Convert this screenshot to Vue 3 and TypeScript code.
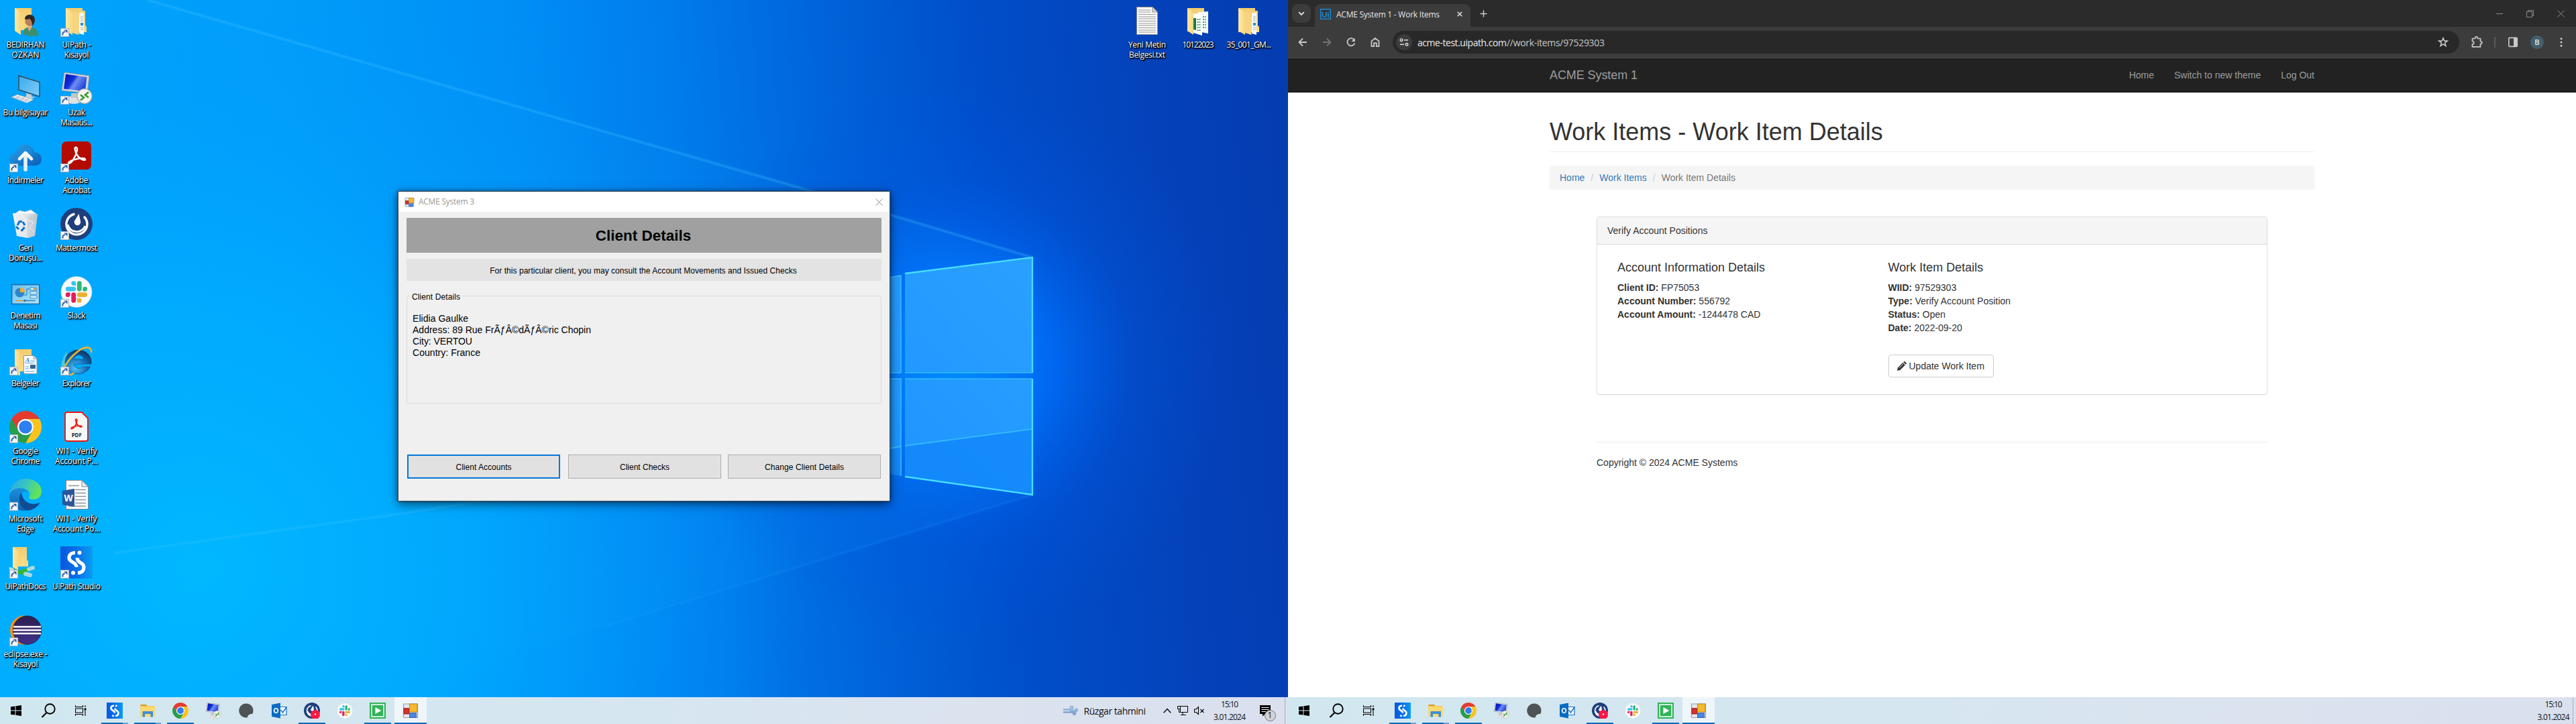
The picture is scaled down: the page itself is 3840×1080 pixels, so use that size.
<script setup lang="ts">
interface Shortcut {
  icon: string
  lines: [string, number][]
  link?: boolean
}

interface TaskItem {
  icon: string
  state?: 'open' | 'stacked' | 'active'
}

// Tracks a label out or in so that it takes the given width in pixels.
const vFit = {
  mounted(el: HTMLElement, binding: { value: number }) {
    const natural = el.getBoundingClientRect().width
    const count = (el.textContent ?? '').length
    if (count > 1) {
      const gap = (binding.value - natural) / (count - 1)
      el.style.letterSpacing = `${gap.toFixed(3)}px`
      el.style.marginRight = `${(-gap).toFixed(3)}px`
    }
  },
}

const columns: Shortcut[][] = [
  [
    { icon: 'user', lines: [['BEDIRHAN', 57], ['OZKAN', 41]] },
    { icon: 'pc', lines: [['Bu bilgisayar', 67]] },
    { icon: 'cloud', lines: [['İndirmeler', 54]], link: true },
    { icon: 'bin', lines: [['Geri', 21], ['Dönüşü...', 50]] },
    { icon: 'panel', lines: [['Denetim', 45], ['Masası', 36]] },
    { icon: 'docs', lines: [['Belgeler', 42]], link: true },
    { icon: 'chrome', lines: [['Google', 38], ['Chrome', 43]], link: true },
    { icon: 'edge', lines: [['Microsoft', 51], ['Edge', 26]], link: true },
    { icon: 'netfolder', lines: [['UiPathDocs', 61]], link: true },
    { icon: 'eclipse', lines: [['eclipse.exe -', 65], ['Kısayol', 37]], link: true },
  ],
  [
    { icon: 'folder', lines: [['UiPath -', 43], ['Kısayol', 37]], link: true },
    { icon: 'rdp', lines: [['Uzak', 26], ['Masaüs...', 48]], link: true },
    { icon: 'acrobat', lines: [['Adobe', 35], ['Acrobat', 42]], link: true },
    { icon: 'mattermost', lines: [['Mattermost', 62]], link: true },
    { icon: 'slack', lines: [['Slack', 27]], link: true },
    { icon: 'ie', lines: [['Explorer', 43]], link: true },
    { icon: 'pdf', lines: [['WI1 - Verify', 61], ['Account P...', 64]] },
    { icon: 'word', lines: [['WI1 - Verify', 61], ['Account Po...', 71]] },
    { icon: 'studio', lines: [['UiPath Studio', 72]], link: true },
  ],
]

const rightShortcuts: Shortcut[] = [
  { icon: 'text', lines: [['Yeni Metin', 56], ['Belgesi.txt', 54]] },
  { icon: 'sheets', lines: [['10122023', 47]] },
  { icon: 'folder', lines: [['35_001_GM...', 67]] },
]

const taskItems: TaskItem[] = [
  { icon: 'studio', state: 'stacked' },
  { icon: 'explorer', state: 'stacked' },
  { icon: 'chrome', state: 'open' },
  { icon: 'rdp' },
  { icon: 'blob' },
  { icon: 'outlook' },
  { icon: 'mattermost-rec', state: 'open' },
  { icon: 'slack' },
  { icon: 'play', state: 'open' },
  { icon: 'form', state: 'active' },
]

const clientLines: [string, number][] = [
  ['Elidia Gaulke', 83],
  ['Address: 89 Rue FrÃƒÂ©dÃƒÂ©ric Chopin', 266],
  ['City: VERTOU', 89],
  ['Country: France', 101],
]

const accountRows: [string, string][] = [
  ['Client ID:', 'FP75053'],
  ['Account Number:', '556792'],
  ['Account Amount:', '-1244478 CAD'],
]

const itemRows: [string, string][] = [
  ['WIID:', '97529303'],
  ['Type:', 'Verify Account Position'],
  ['Status:', 'Open'],
  ['Date:', '2022-09-20'],
]
</script>

<template>
  <svg class="sprite" width="0" height="0" aria-hidden="true">
    <defs>
      <linearGradient id="gFlap" x1="0" y1="0" x2="1" y2="0"><stop offset="0" stop-color="#ffeaa8" /><stop offset="1" stop-color="#f8d67e" /></linearGradient>
      <linearGradient id="gBack" x1="0" y1="0" x2="0" y2="1"><stop offset="0" stop-color="#f3cd6e" /><stop offset="1" stop-color="#fbdc87" /></linearGradient>
      <linearGradient id="gCloud" x1="0" y1="0" x2="1" y2="1"><stop offset="0" stop-color="#2aa3ea" /><stop offset="1" stop-color="#0a5eb8" /></linearGradient>
      <linearGradient id="gScreen" x1="0" y1="0" x2="1" y2="1"><stop offset="0" stop-color="#3aa8ea" /><stop offset="1" stop-color="#7fd0fb" /></linearGradient>
      <linearGradient id="gRdp" x1="0" y1="0" x2="1" y2=".5"><stop offset="0" stop-color="#0410b0" /><stop offset=".45" stop-color="#1230d8" /><stop offset=".6" stop-color="#6f8ff5" /><stop offset="1" stop-color="#2446d8" /></linearGradient>
      <linearGradient id="gPanel" x1="0" y1="0" x2="1" y2="1"><stop offset="0" stop-color="#5fc0f2" /><stop offset="1" stop-color="#b9e8fd" /></linearGradient>
      <radialGradient id="gIe" cx=".4" cy=".75" r=".8"><stop offset="0" stop-color="#4fc6ff" /><stop offset=".55" stop-color="#0f6cb8" /><stop offset="1" stop-color="#0d2f55" /></radialGradient>
      <linearGradient id="gEdgeTop" x1="0" y1="0" x2="1" y2=".3"><stop offset="0" stop-color="#2aa6e8" /><stop offset=".5" stop-color="#34c3c8" /><stop offset="1" stop-color="#63e35a" /></linearGradient>
      <linearGradient id="gEdgeLeft" x1="0" y1="0" x2="0" y2="1"><stop offset="0" stop-color="#1b8fdc" /><stop offset="1" stop-color="#0e5fb4" /></linearGradient>
      <linearGradient id="gStudio" x1="0" y1="0" x2="1" y2="0"><stop offset="0" stop-color="#0758e0" /><stop offset=".5" stop-color="#0b6ee6" /><stop offset="1" stop-color="#0a9cf2" /></linearGradient>
      <linearGradient id="gEclipse" x1="0" y1="0" x2="0" y2="1"><stop offset="0" stop-color="#2a1f4e" /><stop offset="1" stop-color="#43308a" /></linearGradient>
      <linearGradient id="gBin" x1="0" y1="0" x2="1" y2="0"><stop offset="0" stop-color="#f2f5f7" /><stop offset=".6" stop-color="#dfe4e8" /><stop offset="1" stop-color="#b9c2c9" /></linearGradient>

      <symbol id="i-user" viewBox="0 0 48 48">
        <path d="M8 5H33V38H8Z" fill="url(#gBack)" /><path d="M8 5L17 12V45L8 39Z" fill="url(#gFlap)" />
        <path d="M20 44C20 37 24 33 31 33S43 38 43.500 46C35 47.500 27 47 20 44Z" fill="#3c8f6e" /><path d="M26 33L30 40L34 33Z" fill="#d9a57d" />
        <circle cx="30.500" cy="25" r="7.200" fill="#b98058" /><path d="M23 22C23 16 27 15 31 15S38 18 38 23C37 29 35 31 34 31C34 27 33 23 30 21C27 22 25 22 23 22Z" fill="#2c2726" />
      </symbol>
      <symbol id="i-folder" viewBox="0 0 48 48">
        <path d="M8 5H33V9H37V31L39 33V41H8Z" fill="url(#gBack)" /><path d="M28 12H35V45L28 43Z" fill="#f4f7f9" /><path d="M30 18h4M30 21h4M30 24h4M30 34h4M30 37h4" stroke="#9fb0bb" /><path d="M30 27h4v4h-4z" fill="#2a8fd0" />
        <path d="M18 10L27.500 13V45L18 42Z" fill="#f7d580" /><path d="M8 5L18 12V45L8 39Z" fill="url(#gFlap)" />
      </symbol>
      <symbol id="i-sheets" viewBox="0 0 48 48">
        <path d="M8 5H33V40H8Z" fill="url(#gBack)" /><path d="M24 11L39 10V43L24 40Z" fill="#f5f7f8" /><path d="M17 14L27 12L30 18V46L17 42Z" fill="#fff" />
        <path d="M17 20H21V38L17 37Z" fill="#1e7a48" /><path d="M22.500 22h5M22.500 26h5M22.500 30h5M22.500 34h5M22.500 38h5M31 18h4.500M31 22h4.500M31 26h4.500M31 30h4.500M31 34h4.500" stroke="#4f9d72" stroke-width="2" stroke-dasharray="2 1" /><path d="M8 5L17 12V45L8 39Z" fill="url(#gFlap)" />
      </symbol>
      <symbol id="i-docs" viewBox="0 0 48 48">
        <path d="M8 9H33V42H8Z" fill="url(#gBack)" /><path d="M8 9L16 15V49L8 44Z" fill="url(#gFlap)" />
        <path d="M21.500 18.500H36L41 23.500V45.500H21.500Z" fill="#fff" stroke="#8c979f" /><path d="M36 18.500V23.500H41" fill="#dfe5e9" stroke="#8c979f" />
        <text x="24" y="27.500" font-family="Liberation Serif, serif" font-size="9" font-weight="700" font-style="italic" fill="#1779c8">A</text>
        <path d="M31 26.500h7M23.500 29.500h14M23.500 35h6M23.500 38h6M23.500 42h14" stroke="#4aa0dc" /><path d="M31 32h8v6h-8z" fill="#35688f" />
      </symbol>
      <symbol id="i-netfolder" viewBox="0 0 48 48">
        <path d="M5 1H26V20L28 22V30H5Z" fill="url(#gBack)" /><path d="M5 1L13 7V36L5 31Z" fill="url(#gFlap)" />
        <path d="M3 35L28 42M14 39L33 33" stroke="#33b534" stroke-width="5" stroke-linecap="round" /><path d="M29 34L35 32M24 41L31 43" stroke="#a9d9de" stroke-width="6" stroke-linecap="round" /><path d="M1 33.500L4 34.500" stroke="#bfe3e6" stroke-width="5" stroke-linecap="round" />
      </symbol>
      <symbol id="i-pc" viewBox="0 0 48 48">
        <path d="M14 5L45 14.500V36L14 26Z" fill="url(#gScreen)" stroke="#30495e" stroke-width="1.400" /><path d="M25 31L33 33V36L39 37L30 40L21 37L25 35.500Z" fill="#c8d2da" />
        <path d="M3 37L12 33L36 40.500L26 45.500Z" fill="#eef2f5" stroke="#9aa7b2" stroke-width=".8" /><path d="M6 37L27 43.500M9 35.500L30 42M10 38.500L16 35M17 41L23 37M23 43L29 39" stroke="#a9b4bd" stroke-width=".9" />
      </symbol>
      <symbol id="i-rdp" viewBox="0 0 48 48">
        <path d="M6 0L43 5L40 31L2 27Z" fill="#d5d8dc" stroke="#8f969d" stroke-width=".8" /><path d="M8 2.500L39.500 7L37 28L5 24.500Z" fill="url(#gRdp)" />
        <ellipse cx="20" cy="41" rx="12" ry="6" fill="#dfe1e3" /><path d="M16 31H26V38H16Z" fill="#c3c7cb" />
        <circle cx="36" cy="35.500" r="11" fill="#f4f4f2" stroke="#a9a9a6" stroke-width="1.200" /><path d="M30 33.500L35 37.500L30 41.500" fill="none" stroke="#3c9a2f" stroke-width="2.600" /><path d="M42 29.500L37 33.500L42 37.500" fill="none" stroke="#3c9a2f" stroke-width="2.600" />
      </symbol>
      <symbol id="i-cloud" viewBox="0 0 48 48">
        <path d="M10 38C4 38 0 33 0 28.500S4 19 10 19C11 11 16 6.500 23 6.500S35 11 37 18C43 18 48 22 48 28.500S43 38 38 38Z" fill="url(#gCloud)" /><circle cx="23" cy="19" r="11" fill="#1e90dc" opacity=".55" />
        <path d="M24 20V44" stroke="#e8eef4" stroke-width="5.600" stroke-linecap="round" fill="none" /><path d="M15 28L24 19L33 28" stroke="#f5f8fb" stroke-width="4.600" stroke-linecap="round" stroke-linejoin="round" fill="none" />
      </symbol>
      <symbol id="i-acrobat" viewBox="0 0 48 48">
        <rect x="2" y="2" width="44" height="42" rx="7" fill="#b30b00" /><path d="M12 34.500C11.500 30 35 24.500 37 28.500C38 32 24 29 21.500 12.500C22 9 26.500 10.500 24.500 17C22 26.500 16 36 12 34.500Z" fill="none" stroke="#fff" stroke-width="2.400" />
      </symbol>
      <symbol id="i-bin" viewBox="0 0 48 48">
        <path d="M8 9L15 4L23 6L32 3L40 9L24 15Z" fill="#f6f8f9" stroke="#c5cdd3" stroke-width=".6" /><path d="M5 8L42 9L38 42L27 45L11 42Z" fill="url(#gBin)" /><path d="M27 14L27 45L38 42L42 9Z" fill="#c4ccd2" opacity=".6" /><path d="M17 10L24 17L20 24L28 18L36 22L30 30L37 36" fill="none" stroke="#fff" opacity=".7" />
        <path d="M12 26L15 20.500H19M20 21L23 26M22.500 29L19 33.500H17M14 32L10 28" fill="none" stroke="#1173cc" stroke-width="3" />
      </symbol>
      <symbol id="i-mattermost" viewBox="0 0 48 48">
        <circle cx="24" cy="24" r="24" fill="#1e3f7c" /><path d="M20 9.500A15.500 15.500 0 1 0 36 14" fill="none" stroke="#fff" stroke-width="3.400" stroke-linecap="round" /><path d="M11 25A13.500 13 0 0 0 37 27" fill="none" stroke="#fff" stroke-width="3" /><path d="M27.500 9L30 20A4.800 4.800 0 1 1 20.800 20Z" fill="#fff" />
      </symbol>
      <symbol id="i-mattermost-rec" viewBox="0 0 48 48">
        <use href="#i-mattermost" width="48" height="48" /><circle cx="34" cy="36" r="14" fill="#ff1744" /><circle cx="34" cy="35" r="2.400" fill="#fff" />
      </symbol>
      <symbol id="i-panel" viewBox="0 0 48 48">
        <rect x="3.600" y="13.600" width="41" height="28.800" fill="url(#gPanel)" stroke="#1b6fae" stroke-width="1.600" /><circle cx="15.500" cy="25.500" r="7" fill="#2b86c8" /><path d="M16 25V17.500A7.500 7.500 0 0 1 23.500 25Z" fill="#f3a73c" />
        <path d="M22 29H26V20H30" fill="none" stroke="#2b78b4" /><path d="M31 18h10v4H31zM31 24h10v4H31zM31 30h10v4H31z" fill="#d6f0fc" stroke="#3a88bf" /><path d="M36 20h4" stroke="#e88b23" stroke-width="2" /><path d="M9 37.500H22" stroke="#e88b23" stroke-width="1.400" /><path d="M22 37.500H39" stroke="#2b78b4" stroke-width="1.400" /><circle cx="23" cy="37.500" r="1.800" fill="#2b78b4" />
      </symbol>
      <symbol id="i-slack" viewBox="0 0 48 48">
        <circle cx="24" cy="24.500" r="23" fill="#fafafa" stroke="#c9d3d9" stroke-width=".6" />
        <g transform="translate(7.800 8.200) scale(1.350)">
          <path fill="#e01e5a" d="M5.040 15.170a2.520 2.520 0 1 1-2.520-2.520h2.520zM6.310 15.170a2.520 2.520 0 0 1 5.040 0v6.310a2.520 2.520 0 0 1-5.040 0z" />
          <path fill="#36c5f0" d="M8.830 5.040a2.520 2.520 0 1 1 2.520-2.520v2.520zM8.830 6.310a2.520 2.520 0 0 1 0 5.040H2.520a2.520 2.520 0 0 1 0-5.040z" />
          <path fill="#2eb67d" d="M18.960 8.830a2.520 2.520 0 1 1 2.520 2.520h-2.520zM17.690 8.830a2.520 2.520 0 0 1-5.040 0V2.520a2.520 2.520 0 0 1 5.040 0z" />
          <path fill="#ecb22e" d="M15.170 18.960a2.520 2.520 0 1 1-2.520 2.520v-2.520zM15.170 17.690a2.520 2.520 0 0 1 0-5.040h6.310a2.520 2.520 0 0 1 0 5.040z" />
        </g>
      </symbol>
      <symbol id="i-ie" viewBox="0 0 48 48">
        <path d="M10 12C-1 26 -1 46 8 48C16 47 8 22 10 12Z" fill="#7fd8c8" opacity=".6" />
        <path d="M26 10A19.500 18 0 1 0 44.500 35H33.500C31 39 20.500 38.500 20.500 31H46C47.500 18 38 10 26 10ZM20.500 24C21 15.500 34 15.500 34.500 24Z" fill="url(#gIe)" stroke="#1c4a73" stroke-width=".7" />
        <path d="M46 14C47 4 36 4 25 13C11 24 0 42 7 48C11 51 17 47 20 44" fill="none" stroke="#f0b429" stroke-width="2.600" />
      </symbol>
      <symbol id="i-chrome" viewBox="0 0 48 48">
        <path d="M3.220 12A24 24 0 0 1 44.780 12H24A12 12 0 0 0 13.610 30Z" fill="#e33b2e" /><path d="M44.780 12A24 24 0 0 1 24 48L34.390 30A12 12 0 0 0 24 12Z" fill="#fcc31e" /><path d="M24 48A24 24 0 0 1 3.220 12L13.610 30A12 12 0 0 0 34.390 30Z" fill="#2a9c4a" /><circle cx="24" cy="24" r="12" fill="#fff" /><circle cx="24" cy="24" r="9.800" fill="#2d7ff0" />
      </symbol>
      <symbol id="i-pdf" viewBox="0 0 48 48">
        <path d="M10 2H32L41 11V42A3 3 0 0 1 38 45H10A3 3 0 0 1 7 42V5A3 3 0 0 1 10 2Z" fill="#f6f6f5" stroke="#f01a0f" stroke-width="2" />
        <path d="M16 26.500C15.500 23.500 30 20.500 32 23C32.500 25.500 24.500 24 22.500 13.500C22.500 11 26 11.500 24.500 16C23 22 19 28 16 26.500Z" fill="none" stroke="#f01a0f" stroke-width="1.700" />
        <text x="24.200" y="39" text-anchor="middle" font-family="Open Sans, sans-serif" font-size="8" font-weight="700" textLength="15" lengthAdjust="spacingAndGlyphs" fill="#222">PDF</text>
      </symbol>
      <symbol id="i-edge" viewBox="0 0 48 48">
        <path d="M0 24C1 9 12 0 24 0C38 0 48 9 48 19C48 27 42 31 36 31C30 31 28 29 30 26C32 20 27 15 18 14C9 14 2 18 0 24Z" fill="url(#gEdgeTop)" />
        <path d="M0 25C2 17 10 13 18 14.500C24 15.500 27 18 28 21C21 16 14 22 14 31C14 39 20 46 27 47.500C12 50 -1 39 0 25Z" fill="url(#gEdgeLeft)" />
        <path d="M18 21C11 28 14 44 27 47.500C35 47 41 43 45 37C45 36 44 35.500 43 36.500C33 40 20 36 18 21Z" fill="#0f4c94" />
      </symbol>
      <symbol id="i-word" viewBox="0 0 48 48">
        <path d="M8.500 2.500H32L41.500 12V45.500H8.500Z" fill="#fff" stroke="#7d868d" /><path d="M32 2.500V12H41.500Z" fill="#e9ecee" stroke="#7d868d" /><path d="M12 10.500H28M22 16.500H38M22 21.500H38M22 26.500H38M22 31.500H38M22 36.500H38M12 41H38" stroke="#8d9499" stroke-width="1.300" />
        <path d="M3 18L21 15V42L3 39Z" fill="#2a5699" /><text x="12" y="34" text-anchor="middle" font-family="Liberation Sans, sans-serif" font-size="14" font-weight="700" fill="#fff">W</text>
      </symbol>
      <symbol id="i-studio" viewBox="0 0 48 48">
        <rect width="48" height="48" fill="url(#gStudio)" /><path d="M22 9.500C16 9.500 13 13 13 17C13 25 24 22 24 31" fill="none" stroke="#fff" stroke-width="5.200" /><path d="M26 39.500C32 39.500 35 36 35 31C35 23 25 26 25 17" fill="none" stroke="#fff" stroke-width="5.200" /><circle cx="28.500" cy="9.500" r="3" fill="#fff" /><circle cx="19" cy="39.500" r="3" fill="#fff" />
      </symbol>
      <symbol id="i-eclipse" viewBox="0 0 48 48">
        <path d="M23 2A22 22 0 0 0 23 46A26 26 0 0 1 23 2Z" fill="#f7941e" /><circle cx="26.500" cy="24" r="21.200" fill="url(#gEclipse)" stroke="#1a1330" stroke-width=".8" /><path d="M6 19H47M5.500 24H47.500M6 29H47" stroke="#fff" stroke-width="2.600" />
      </symbol>
      <symbol id="i-text" viewBox="0 0 48 48">
        <path d="M8.500 3.500H32L39.500 11V44.500H8.500Z" fill="#f8f8f8" stroke="#8a8a86" /><path d="M32 3.500V11H39.500Z" fill="#d8d8d4" stroke="#8a8a86" /><path d="M11 8H29M11 11H29M11 14.500H37M11 18H37M11 21H37M11 24.500H37M11 28H37M11 31H37M11 34.500H37M11 38H37M11 41H37" stroke="#9a9a98" stroke-width="1" />
      </symbol>
      <symbol id="i-explorer" viewBox="0 0 48 48">
        <path d="M3 6H20L22 10H45V42H3Z" fill="#f7c74b" /><path d="M3 6H20L22 10H3Z" fill="#d9981f" /><path d="M3 12H45V42H3Z" fill="#fbd870" /><path d="M9 26H40V43H33V34H16V43H9Z" fill="#3f8fd2" />
      </symbol>
      <symbol id="i-blob" viewBox="0 0 48 48">
        <path d="M24 3A21 21 0 1 0 28 44.500C28 38 33 34 42.500 34A21 21 0 0 0 24 3Z" fill="#4e5355" />
      </symbol>
      <symbol id="i-outlook" viewBox="0 0 48 48">
        <path d="M24 13H46V37H24Z" fill="#fff" stroke="#0f6fc5" stroke-width="2.400" /><path d="M29 22L35 30L46 14" fill="none" stroke="#0f6fc5" stroke-width="3" /><path d="M2 6L28 1V47L2 42Z" fill="#0a6cc4" /><text x="15" y="31" text-anchor="middle" font-family="Liberation Sans, sans-serif" font-size="20" font-weight="700" fill="#fff">O</text>
      </symbol>
      <symbol id="i-play" viewBox="0 0 48 48">
        <rect width="48" height="48" fill="#2fb457" /><rect x="6" y="6" width="36" height="36" fill="none" stroke="#e3f7e8" stroke-width="3.600" /><path d="M17 14L35 24L17 34Z" fill="#fff" />
      </symbol>
      <symbol id="i-form" viewBox="0 0 48 48">
        <path d="M3 4H45V45H3Z" fill="#e4e7ec" stroke="#98a0aa" stroke-width="2.400" /><rect x="21" y="4" width="23" height="24" fill="#f4b92e" stroke="#b07a10" stroke-width="1.600" /><rect x="4" y="17" width="15" height="17" fill="#d5302a" stroke="#8f1512" stroke-width="1.600" /><rect x="21" y="31" width="20" height="14" fill="#4d84dc" stroke="#2d5dab" stroke-width="1.600" />
      </symbol>
      <symbol id="i-link" viewBox="0 0 13 13">
        <rect x=".5" y=".5" width="12" height="12" fill="#f6f6f6" stroke="#a9b2b8" /><path d="M3.500 10.500C3 7 4.500 5.200 7 5.200" fill="none" stroke="#2a5ca8" stroke-width="2" /><path d="M5.500 2.500H10.500V7.500Z" fill="#2a5ca8" />
      </symbol>
      <symbol id="i-start" viewBox="0 0 16 16"><path d="M0 2.300L6.500 1.400V7.500H0ZM7.500 1.250L16 0V7.500H7.500ZM0 8.500H6.500V14.600L0 13.700ZM7.500 8.500H16V16L7.500 14.800Z" fill="#000" /></symbol>
      <symbol id="i-search" viewBox="0 0 22 22"><circle cx="13.500" cy="8.500" r="7.200" fill="none" stroke="#000" stroke-width="1.900" /><path d="M8.500 14L1.500 21" stroke="#000" stroke-width="2.200" /></symbol>
      <symbol id="i-tasks" viewBox="0 0 17 16"><path d="M.5 0V2.500H11.500V0M.5 16V13.500H11.500V16M.5 5H11.500V11H.5ZM15 0V3M15 8V16" fill="none" stroke="#000" stroke-width="1.100" /><path d="M13.500 4.500H16.500V7.500H13.500Z" /></symbol>
    </defs>
  </svg>

  <main class="stage">
    <section class="screen desktop">
      <svg class="wallpaper" viewBox="0 0 1920 1080" preserveAspectRatio="none" aria-hidden="true">
        <defs>
          <linearGradient id="wBase" gradientUnits="userSpaceOnUse" x1="0" y1="80" x2="1900" y2="-80">
            <stop offset="0" stop-color="#00a5fb" /><stop offset=".22" stop-color="#009dfa" /><stop offset=".4" stop-color="#008ff6" /><stop offset=".52" stop-color="#007dec" /><stop offset=".64" stop-color="#0064da" /><stop offset=".76" stop-color="#004eca" /><stop offset=".88" stop-color="#0443bb" /><stop offset="1" stop-color="#053cb0" />
          </linearGradient>
          <radialGradient id="wLeft" gradientUnits="userSpaceOnUse" cx="300" cy="850" r="900"><stop offset="0" stop-color="#00b8ff" /><stop offset=".45" stop-color="#00adff" stop-opacity=".75" /><stop offset="1" stop-color="#0092ff" stop-opacity="0" /></radialGradient>
          <radialGradient id="wGlow" gradientUnits="userSpaceOnUse" cx="1420" cy="540" r="420"><stop offset="0" stop-color="#008cff" /><stop offset=".35" stop-color="#0070fb" stop-opacity=".8" /><stop offset=".65" stop-color="#005ae4" stop-opacity=".3" /><stop offset="1" stop-color="#0050e0" stop-opacity="0" /></radialGradient>
          <linearGradient id="wBeam" gradientUnits="userSpaceOnUse" x1="200" y1="0" x2="1500" y2="0"><stop offset="0" stop-color="#18b4ff" stop-opacity=".1" /><stop offset="1" stop-color="#0a90ff" stop-opacity=".3" /></linearGradient>
          <linearGradient id="wPane" x1="0" y1="1" x2="1" y2="0"><stop offset="0" stop-color="#1b93ff" /><stop offset="1" stop-color="#2aa0ff" /></linearGradient>
          <filter id="wSoft" x="-20%" y="-20%" width="140%" height="140%"><feGaussianBlur stdDeviation="1.200" /></filter>
        </defs>
        <rect width="1920" height="1080" fill="url(#wBase)" />
        <rect width="1920" height="1080" fill="url(#wLeft)" />
        <rect width="1920" height="1080" fill="url(#wGlow)" />
        <path d="M220 0L1206 284L1539 384V738L560 1040L0 1080V0Z" fill="url(#wBeam)" opacity=".4" />
        <path d="M220 0L1206 284L1539 384" fill="none" stroke="#3fc0ff" stroke-opacity=".4" stroke-width="3" filter="url(#wSoft)" />
        <path d="M170 825L593 767L1343 650" fill="none" stroke="#4accff" stroke-opacity=".25" stroke-width="3" filter="url(#wSoft)" />
        <path d="M1539 738L900 935" fill="none" stroke="#28a0ff" stroke-opacity=".18" stroke-width="3" filter="url(#wSoft)" />
        <path d="M1230 430L1343 411V556H1230ZM1230 565H1343V710L1230 690ZM1349 408L1539 384V556H1349ZM1349 565H1539V738L1349 711Z" fill="url(#wPane)" />
        <path d="M1230 690L1343 666V710L1230 690ZM1349 665L1539 640V738L1349 711Z" fill="#0a7ef8" opacity=".55" />
        <path d="M1230 686L1343 666M1349 665L1539 640" stroke="#3cc8ff" stroke-width="2" opacity=".7" />
        <path d="M1349 408L1539 384V556H1349M1539 565V738L1349 711M1349 565H1539M1230 430L1343 411V556H1230M1230 565H1343V710" fill="none" stroke="#33bcff" stroke-width="1.600" />
        <path d="M1349 408L1539 384V556M1539 565V738L1349 711" fill="none" stroke="#46dcff" stroke-width="2.400" />
      </svg>

      <div class="shortcuts">
        <div v-for="(col, c) in columns" :key="c" class="col">
          <div v-for="(s, i) in col" :key="i" class="shortcut">
            <div class="glyph">
              <svg class="big"><use :href="'#i-' + s.icon" /></svg>
              <svg v-if="s.link" class="linkmark"><use href="#i-link" /></svg>
            </div>
            <div v-for="(l, n) in s.lines" :key="n" class="label"><span v-fit="l[1]">{{ l[0] }}</span></div>
          </div>
        </div>
        <div class="spacer"></div>
        <div class="rightset">
          <div v-for="(s, i) in rightShortcuts" :key="i" class="shortcut">
            <div class="glyph"><svg class="big"><use :href="'#i-' + s.icon" /></svg></div>
            <div v-for="(l, n) in s.lines" :key="n" class="label"><span v-fit="l[1]">{{ l[0] }}</span></div>
          </div>
        </div>
      </div>

      <div class="dialog">
        <header class="titlebar">
          <svg class="formicon"><use href="#i-form" /></svg>
          <span v-fit="83">ACME System 3</span>
          <svg class="winclose" viewBox="0 0 11 11"><path d="M.5 .5L10.500 10.500M10.500 .5L.5 10.500" stroke="#8a8a8a" /></svg>
        </header>
        <div class="banner"><span v-fit="142.500">Client Details</span></div>
        <div class="hint"><span v-fit="457.500">For this particular client, you may consult the Account Movements and Issued Checks</span></div>
        <div class="group">
          <div class="legend"><span v-fit="72">Client Details</span></div>
          <div class="client">
            <div v-for="l in clientLines" :key="l[0]"><span v-fit="l[1]">{{ l[0] }}</span></div>
          </div>
        </div>
        <div class="actions">
          <button class="primary"><span v-fit="83">Client Accounts</span></button>
          <button class="second"><span v-fit="74">Client Checks</span></button>
          <button class="third"><span v-fit="118">Change Client Details</span></button>
        </div>
      </div>

      <footer class="taskbar">
        <div class="sysbtn"><svg width="16" height="16"><use href="#i-start" /></svg></div>
        <div class="sysbtn"><svg width="22" height="22"><use href="#i-search" /></svg></div>
        <div class="sysbtn last"><svg width="17" height="16"><use href="#i-tasks" /></svg></div>
        <div v-for="(t, i) in taskItems" :key="i" class="task" :class="t.state"><svg class="ticon"><use :href="'#i-' + t.icon" /></svg></div>
        <div class="spacer"></div>
        <div class="weather">
          <svg width="24" height="18" viewBox="0 0 24 18"><path d="M1 7.500H13.500" stroke="#8fb2d8" stroke-width="2.600" /><circle cx="13.500" cy="5" r="3.400" fill="#9dbde0" /><path d="M1 11.500H18" stroke="#7fa5cf" stroke-width="2.600" /><circle cx="17.500" cy="13" r="3" fill="#7fa5cf" /><path d="M11 9.500H22" stroke="#88accf" stroke-width="2.400" /><circle cx="20.500" cy="8" r="2.600" fill="#8fb2d8" /></svg>
          <span v-fit="92.500">Rüzgar tahmini</span>
        </div>
        <div class="tray">
          <svg width="12" height="8" viewBox="0 0 12 8"><path d="M.7 7.300L6 1.500L11.300 7.300" fill="none" stroke="#000" stroke-width="1.300" /></svg>
          <svg width="16" height="14" viewBox="0 0 16 14"><path d="M3.500 .5H15.500V9.500H4.500V3.500M8 10V13M5 13.500H13M.5 .5H4.500V4.500H.5ZM2.500 4.500V9.500H4.500" fill="none" stroke="#000" /></svg>
          <svg width="16" height="14" viewBox="0 0 16 14"><path d="M.5 5H3L6.500 1.500V12.500L3 9.500H.5ZM9.500 5L14.500 10M14.500 5L9.500 10" fill="none" stroke="#000" stroke-width="1.100" /></svg>
        </div>
        <div class="clock"><div><span v-fit="26">15:10</span></div><div><span v-fit="48">3.01.2024</span></div></div>
        <div class="notice">
          <svg width="26" height="26" viewBox="0 0 26 26"><path d="M0 2H16V15H8L4 18.500V15H0Z" fill="#000" /><path d="M2.500 5.500H13.500M2.500 8.500H13.500M2.500 11.500H9" stroke="#fff" /><circle cx="15.500" cy="17.500" r="8" fill="#d3d3d3" stroke="#777" /></svg>
          <span class="count">1</span>
        </div>
        <div class="peek"></div>
      </footer>
    </section>

    <section class="screen browser">
      <div class="tabstrip">
        <div class="tabsearch"><svg width="10" height="7" viewBox="0 0 10 7"><path d="M1.200 1.200L5 5L8.800 1.200" fill="none" stroke="#e6e6e6" stroke-width="1.800" /></svg></div>
        <div class="tab">
          <svg class="favicon" viewBox="0 0 16 16"><rect x=".8" y=".8" width="14.400" height="14.400" fill="#333" stroke="#1b85d2" stroke-width="1.600" /><text x="8" y="12.500" text-anchor="middle" font-family="Liberation Sans, sans-serif" font-weight="700" font-size="11.500" fill="#1f8bd8">Ui</text></svg>
          <span v-fit="154">ACME System 1 - Work Items</span>
          <svg class="tabclose" viewBox="0 0 8 8"><path d="M.7 .7L7.300 7.300M7.300 .7L.7 7.300" stroke="#e0e0e0" stroke-width="1.500" /></svg>
        </div>
        <svg class="newtab" viewBox="0 0 11 11"><path d="M5.500 .5V10.500M.5 5.500H10.500" stroke="#c9c9c9" stroke-width="1.500" /></svg>
        <div class="spacer"></div>
        <div class="wincontrols">
          <svg width="10" height="11" viewBox="0 0 10 11"><path d="M0 5.500H10" stroke="#8c8c8c" /></svg>
          <svg width="11" height="11" viewBox="0 0 11 11"><path d="M.5 2.500H8.500V10.500H.5ZM2.500 2.500V.5H10.500V8.500H8.500" fill="none" stroke="#8c8c8c" /></svg>
          <svg width="11" height="11" viewBox="0 0 11 11"><path d="M.5 .5L10.500 10.500M10.500 .5L.5 10.500" stroke="#8c8c8c" /></svg>
        </div>
      </div>
      <div class="toolbar">
        <svg class="nav" viewBox="0 0 16 16"><path d="M14 8H3M8 2.500L2.500 8L8 13.500" fill="none" stroke="#c9c9c9" stroke-width="1.800" /></svg>
        <svg class="nav" viewBox="0 0 16 16"><path d="M2 8H13M8 2.500L13.500 8L8 13.500" fill="none" stroke="#747474" stroke-width="1.800" /></svg>
        <svg class="nav" viewBox="0 0 16 16"><path d="M12.700 4.500A5.600 5.600 0 1 0 13.400 9.500" fill="none" stroke="#c9c9c9" stroke-width="1.800" /><path d="M13.800 1.800V7H8.600Z" fill="#c9c9c9" /></svg>
        <svg class="nav" viewBox="0 0 16 16"><path d="M2.500 14.200V6.400L8 2L13.500 6.400V14.200H9.800V9.200H6.200V14.200Z" fill="none" stroke="#c9c9c9" stroke-width="1.800" /></svg>
        <div class="omnibox">
          <div class="siteinfo"><svg width="14" height="12" viewBox="0 0 14 12"><circle cx="3" cy="2.700" r="1.800" fill="none" stroke="#dedede" stroke-width="1.400" /><path d="M7 2.700H13M1 9.300H7" stroke="#dedede" stroke-width="1.600" /><circle cx="11" cy="9.300" r="1.800" fill="none" stroke="#dedede" stroke-width="1.400" /></svg></div>
          <span class="host" v-fit="133">acme-test.uipath.com</span><span class="path" v-fit="146">//work-items/97529303</span>
          <div class="spacer"></div>
          <svg class="star" viewBox="0 0 16 16"><path d="M8 1.800L9.700 6H14.200L10.600 8.900L11.900 13.500L8 10.900L4.100 13.500L5.400 8.900L1.800 6H6.300Z" fill="none" stroke="#d0d0d0" stroke-width="1.500" /></svg>
        </div>
        <svg class="ext" viewBox="0 0 18 18"><path d="M2.500 3.500H6.500C6.500 0 10.500 0 10.500 3.500H14.500V7.500C17.500 7.500 17.500 11.500 14.500 11.500V15.800H2.500V12C5.500 12 5.500 7.500 2.500 7.500Z" fill="none" stroke="#c9c9c9" stroke-width="1.700" /></svg>
        <div class="sep"></div>
        <svg class="side" viewBox="0 0 16 16"><rect x="1.900" y="1.400" width="12.400" height="13" rx="1" fill="none" stroke="#c9c9c9" stroke-width="1.600" /><path d="M9 1.500H14.500V14.500H9Z" fill="#c9c9c9" /></svg>
        <div class="avatar">B</div>
        <svg class="menu" viewBox="0 0 4 16"><circle cx="2" cy="2.700" r="1.500" fill="#c9c9c9" /><circle cx="2" cy="8" r="1.500" fill="#c9c9c9" /><circle cx="2" cy="13.300" r="1.500" fill="#c9c9c9" /></svg>
      </div>
      <nav class="navbar">
        <div class="container">
          <span class="brand" v-fit="131">ACME System 1</span>
          <div class="spacer"></div>
          <a>Home</a><a>Switch to new theme</a><a>Log Out</a>
        </div>
      </nav>
      <div class="page">
        <h1>Work Items - Work Item Details</h1>
        <div class="crumbs"><a>Home</a><i>/</i><a>Work Items</a><i>/</i><span>Work Item Details</span></div>
        <div class="card">
          <div class="cardhead">Verify Account Positions</div>
          <div class="cardbody">
            <div class="part account">
              <h4>Account Information Details</h4>
              <p v-for="r in accountRows" :key="r[0]"><b>{{ r[0] }}</b> {{ r[1] }}</p>
            </div>
            <div class="part">
              <h4>Work Item Details</h4>
              <p v-for="r in itemRows" :key="r[0]"><b>{{ r[0] }}</b> {{ r[1] }}</p>
              <button class="update">
                <svg width="14" height="14" viewBox="0 0 14 14"><path d="M0 14L1 9.500L8.500 2L12 5.500L4.500 13ZM9.300 1.200L10.300 .3Q11 -.2 11.700 .4L13.600 2.300Q14.200 3 13.700 3.700L12.800 4.700Z" fill="#333" /><path d="M3 10L9 4" stroke="#fff" stroke-width=".8" /></svg>
                Update Work Item
              </button>
            </div>
          </div>
        </div>
        <div class="foot">Copyright © 2024 ACME Systems</div>
      </div>
      <footer class="taskbar">
        <div class="sysbtn"><svg width="16" height="16"><use href="#i-start" /></svg></div>
        <div class="sysbtn"><svg width="22" height="22"><use href="#i-search" /></svg></div>
        <div class="sysbtn last"><svg width="17" height="16"><use href="#i-tasks" /></svg></div>
        <div v-for="(t, i) in taskItems" :key="i" class="task" :class="t.state"><svg class="ticon"><use :href="'#i-' + t.icon" /></svg></div>
        <div class="spacer"></div>
        <div class="clock alone"><div><span v-fit="26">15:10</span></div><div><span v-fit="48">3.01.2024</span></div></div>
        <div class="peek"></div>
      </footer>
    </section>
  </main>
</template>

<style>
body { margin: 0; background: #fff; overflow: hidden; }
</style>

<style scoped>
.sprite { position: absolute; }
.stage { display: flex; width: 3840px; height: 1080px; overflow: hidden; }
.stage * { box-sizing: border-box; }
.stage svg { display: block; flex: none; }
.stage span { white-space: nowrap; }
.spacer { flex: 1; }
.screen { position: relative; width: 1920px; height: 1080px; display: flex; flex-direction: column; flex: none; overflow: hidden; }
.wallpaper { position: absolute; left: 0; top: 0; width: 1920px; height: 1080px; }

.shortcuts { position: relative; flex: 1; display: flex; align-items: flex-start; padding: 7px 20px 0 0; }
.col { display: flex; flex-direction: column; }
.shortcut { width: 76px; height: 101px; display: flex; flex-direction: column; align-items: center; }
.glyph { position: relative; width: 48px; height: 48px; margin-bottom: 4px; }
.big { width: 48px; height: 48px; overflow: visible; }
.linkmark { position: absolute; left: 0; top: 35px; width: 13px; height: 13px; }
.label { height: 15px; font: 12px/15px "Open Sans", "Noto Sans", sans-serif; color: #fff; text-shadow: 1px 1px 1px #000, 1px 1px 1px #000, 1px 2px 2px rgba(0, 0, 0, .9), 0 0 2px rgba(0, 0, 0, .6); }
.label span, .client span { display: inline-block; }
.rightset { display: flex; }

.dialog { position: absolute; left: 593px; top: 285px; width: 734px; height: 463px; border: 1px solid #3d4a55; background: #f0f0f0; box-shadow: 0 4px 14px rgba(0, 0, 0, .55), 0 0 5px rgba(0, 0, 0, .4); font: 12px/15px "Liberation Sans", Arial, sans-serif; color: #000; display: flex; flex-direction: column; padding: 0 12px; }
.titlebar { display: flex; align-items: center; height: 30px; margin: 0 -12px 9px; padding: 0 10px 0 9px; background: #fff; font: 12px/16px "Open Sans", "Noto Sans", sans-serif; color: #999; }
.formicon { width: 15px; height: 15px; margin-right: 6px; }
.winclose { width: 11px; height: 11px; margin-left: auto; }
.banner { height: 52px; margin-bottom: 9px; background: #a0a0a0; display: flex; align-items: center; justify-content: center; padding-right: 2px; font-size: 22.400px; font-weight: 700; }
.hint { height: 33px; background: #e3e3e3; display: flex; align-items: center; justify-content: center; padding: 3px 2px 0 0; }
.group { margin-top: 22px; height: 161px; border: 1px solid #dcdcdc; padding-left: 5px; }
.legend { display: inline-block; margin-top: -7px; height: 16px; padding: 0 2px; background: #f0f0f0; line-height: 16px; vertical-align: top; }
.client { margin: 10px 0 0 3px; font-size: 14px; line-height: 17px; }
.client div { height: 17px; }
.actions { display: flex; margin: 76px 0 0 1px; }
.actions button { height: 36px; width: 228px; padding: 3px 0 0; border: 1px solid #adadad; background: #e1e1e1; font: 12px/15px "Liberation Sans", Arial, sans-serif; color: #000; border-radius: 0; }
.actions .primary { border: 2px solid #0078d7; padding-top: 2px; }
.actions .second { margin-left: 12px; }
.actions .third { margin-left: 10px; }

.taskbar { position: relative; height: 40px; flex: none; display: flex; align-items: stretch; background: linear-gradient(90deg, #d1e7ef 0, #d6e6f0 50%, #dbe3ef 75%, #dae0ee 100%); font: 12px/19px "Open Sans", "Noto Sans", sans-serif; color: #111; }
.sysbtn { width: 48px; display: flex; align-items: center; justify-content: center; }
.sysbtn.last { margin-right: 3px; }
.task { position: relative; width: 48px; margin-right: 1px; display: flex; align-items: center; justify-content: center; }
.ticon { width: 24px; height: 24px; }
.task.open::after, .task.stacked::after { content: ""; position: absolute; left: 4px; right: 4px; bottom: 0; height: 2px; background: #0067b8; }
.task.stacked::after { background: linear-gradient(90deg, #0067b8 32px, #6aa3cf 32px); }
.task.active { background: #eff6fa; border-bottom: 2px solid #0067b8; padding-top: 2px; }
.weather { display: flex; align-items: center; gap: 8px; font-size: 14px; margin-right: 26px; }
.tray { display: flex; align-items: center; gap: 9px; width: 61px; }
.clock { width: 76px; padding-top: 1px; text-align: center; }
.clock div { height: 19px; }
.clock.alone { width: 57px; }
.notice { position: relative; width: 44px; padding: 10px 0 0 7px; }
.count { position: absolute; left: 18.500px; top: 18px; font-size: 12px; line-height: 18px; }
.peek { width: 5px; border-left: 1px solid #a8b0bc; }

.browser { background: #fff; font-family: "Open Sans", "Noto Sans", sans-serif; }
.tabstrip { height: 40px; background: #2b2b2b; display: flex; align-items: center; flex: none; padding-left: 6px; color: #e6e6e6; font-size: 12px; }
.tabsearch { width: 28px; height: 28px; border-radius: 9px; background: #3c3c3c; display: flex; align-items: center; justify-content: center; }
.tab { width: 232px; height: 34px; align-self: flex-end; margin-left: 6px; background: #3c3c3c; border-radius: 9px 9px 0 0; display: flex; align-items: center; padding: 0 12px 4px 8px; }
.favicon { width: 16px; height: 16px; margin-right: 8px; }
.tabclose { width: 8px; height: 8px; margin-left: auto; }
.newtab { width: 11px; height: 11px; margin-left: 14px; }
.wincontrols { display: flex; align-items: center; gap: 35px; margin-right: 17px; }
.toolbar { height: 47px; flex: none; background: #3c3c3c; border-bottom: 1px solid #4a4a4a; display: flex; align-items: center; padding-left: 14px; }
.nav { width: 16px; height: 16px; margin-right: 20px; }
.omnibox { width: 1590px; height: 34px; margin-left: -2px; border-radius: 17px; background: #282828; display: flex; align-items: center; padding: 0 16px 0 5px; font-size: 14px; }
.siteinfo { width: 24px; height: 24px; border-radius: 12px; background: #3c3c3c; display: flex; align-items: center; justify-content: center; margin-right: 8px; }
.host { color: #e8e8e8; }
.path { color: #c7c7c7; }
.star { width: 16px; height: 16px; }
.ext { width: 18px; height: 18px; margin-left: 17px; }
.sep { width: 2px; height: 16px; margin-left: 17px; background: #5a5a5a; }
.side { width: 16px; height: 16px; margin-left: 18px; }
.avatar { width: 20px; height: 20px; border-radius: 10px; margin-left: 18px; background: #455f6c; color: #e6eef2; font-size: 11px; font-weight: 600; line-height: 20px; text-align: center; }
.menu { width: 4px; height: 16px; margin-left: 24px; }

.navbar { height: 51px; flex: none; background: #222; border-bottom: 1px solid #080808; color: #9d9d9d; font: 14px/20px "Liberation Sans", Arial, sans-serif; }
.container { width: 1140px; height: 50px; margin: 0 auto; display: flex; align-items: center; }
.brand { font-size: 18px; }
.navbar a { margin-left: 30px; }
.page { flex: 1; width: 1140px; margin: 0 auto; color: #333; font: 14px/20px "Liberation Sans", Arial, sans-serif; }
h1 { margin: 39px 0 20px; height: 50px; padding-bottom: 9px; border-bottom: 1px solid #eee; font-size: 36px; line-height: 40px; font-weight: 400; }
.crumbs { height: 36px; border-radius: 4px; background: #f5f5f5; padding: 8px 15px; color: #777; }
.crumbs a { color: #337ab7; }
.crumbs i { font-style: normal; color: #ccc; padding: 0 9px; }
.card { width: 1000px; height: 266px; margin: 40px auto 0; border: 1px solid #ddd; border-radius: 4px; box-shadow: 0 1px 1px rgba(0, 0, 0, .05); }
.cardhead { height: 41px; padding: 10px 15px; background: #f5f5f5; border-bottom: 1px solid #ddd; border-radius: 3px 3px 0 0; }
.cardbody { display: flex; padding: 24px 30px; }
.account { width: 403.500px; }
h4 { margin: 0 0 10px; font-size: 18px; line-height: 20px; font-weight: 400; }
p { margin: 0; }
.update { display: flex; align-items: center; gap: 4px; margin-top: 30px; height: 34px; width: 157px; padding: 0 12px; border: 1px solid #ccc; border-radius: 4px; background: #fff; color: #333; font: 14px/20px "Liberation Sans", Arial, sans-serif; white-space: nowrap; }
.foot { width: 1000px; margin: 70px auto 0; padding-top: 20px; border-top: 1px solid #eee; }
</style>
